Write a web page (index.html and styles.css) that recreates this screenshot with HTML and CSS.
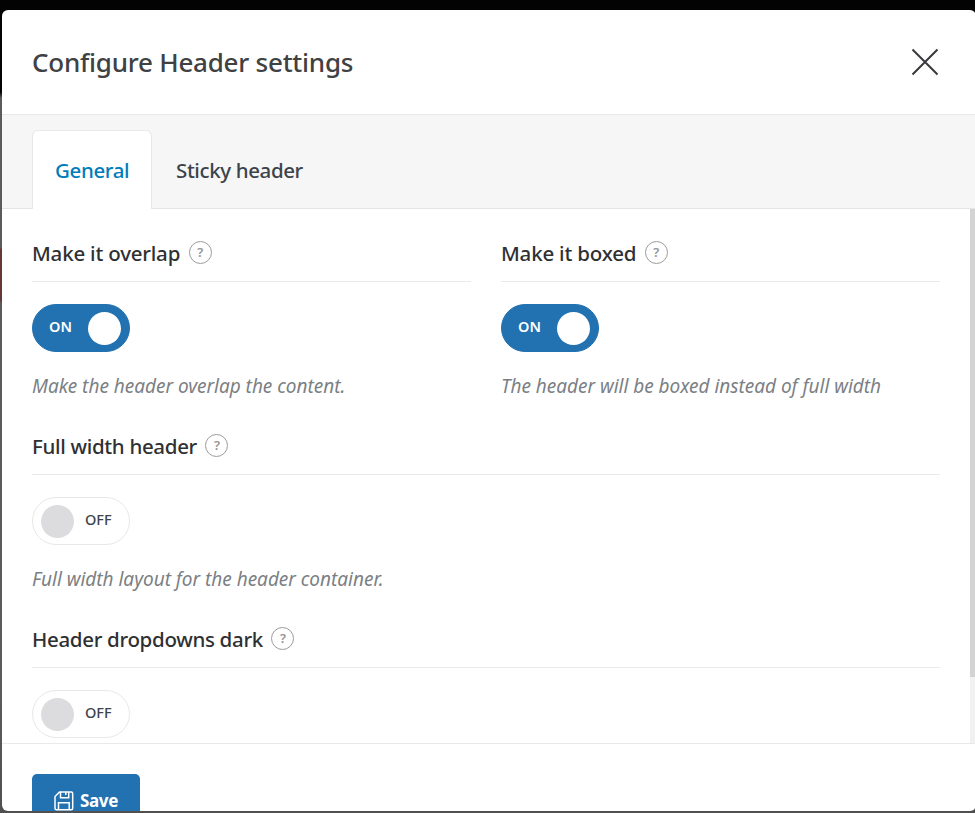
FILE: index.html
```html
<!DOCTYPE html>
<html lang="en">
<head>
<meta charset="utf-8">
<title>Configure Header settings</title>
<link rel="stylesheet" href="styles.css">
</head>
<body>
<div class="modal">
  <header class="modal-header">
    <h1 class="title"><span>Configure Header settings</span></h1>
    <svg class="close" viewBox="0 0 28 28" width="28" height="28"><path d="M1.5 1.5 26.5 26.5M26.5 1.5 1.5 26.5"/></svg>
  </header>
  <nav class="tabs">
    <div class="tab active"><span>General</span></div>
    <div class="tab"><span>Sticky header</span></div>
  </nav>
  <main class="content">
    <div class="fields">
      <section class="field">
        <div class="label"><span>Make it overlap</span><i class="help">?</i></div>
        <div class="switch on"><span class="state">ON</span><span class="knob"></span></div>
        <p class="hint">Make the header overlap the content.</p>
      </section>
      <section class="field">
        <div class="label"><span>Make it boxed</span><i class="help">?</i></div>
        <div class="switch on"><span class="state">ON</span><span class="knob"></span></div>
        <p class="hint">The header will be boxed instead of full width</p>
      </section>
      <section class="field wide">
        <div class="label"><span>Full width header</span><i class="help">?</i></div>
        <div class="switch"><span class="knob"></span><span class="state">OFF</span></div>
        <p class="hint">Full width layout for the header container.</p>
      </section>
      <section class="field wide">
        <div class="label"><span>Header dropdowns dark</span><i class="help">?</i></div>
        <div class="switch"><span class="knob"></span><span class="state">OFF</span></div>
      </section>
    </div>
    <div class="scrollbar"><div class="thumb"></div></div>
  </main>
  <footer class="modal-footer">
    <div class="save">
      <svg viewBox="0 0 20 20" width="20" height="20"><path d="M5.5 1H17.2Q18.7 1 18.7 2.5V17.2Q18.7 18.7 17.2 18.7H2.5Q1 18.7 1 17.2V5.5ZM6.5 1V6.7H14.7V1M11.8 1V4M4.5 18.7V11.8H15.2V18.7"/></svg>
      <span>Save</span>
    </div>
  </footer>
</div>
</body>
</html>
```
FILE: styles.css
```css
* { box-sizing: border-box; }
body {
  margin: 0;
  height: 813px;
  padding: 10px 0 0 2px;
  overflow: hidden;
  background: linear-gradient(#030303 0 92px, #5b5b5c 98px 247px, #673636 250px 300px, #5b5b5c 303px 700px, #505051);
  font-family: "Noto Sans", "Open Sans", sans-serif;
}
.modal {
  display: flex;
  flex-direction: column;
  width: 974px;
  height: 801px;
  overflow: hidden;
  border-radius: 6px;
  background: #fff;
}
.modal-header {
  display: flex;
  flex: 0 0 105px;
  align-items: center;
  justify-content: space-between;
  padding: 0 37.5px 0 30px;
  border-bottom: 1px solid #e9e9e9;
}
.title { margin: 0; color: #404143; font-size: 26px; font-weight: 500; letter-spacing: -0.24px; line-height: 36px; white-space: nowrap; }
.close { fill: none; stroke: #38393c; stroke-width: 2; }
.tabs {
  display: flex;
  flex: 0 0 94px;
  align-items: flex-end;
  padding-left: 30px;
  background: #f6f6f6;
  box-shadow: inset 0 -1px #e4e5e6;
}
.tab {
  height: 79px;
  padding: 26px 24px 0;
  color: #3c434a;
  font-size: 20.5px;
  font-weight: 500;
  letter-spacing: -0.38px;
  line-height: 28px;
  white-space: nowrap;
}
.tab.active {
  width: 120px;
  border: 1px solid #e8e8e8;
  border-bottom: 0;
  border-radius: 6px 6px 0 0;
  background: #fff;
  padding: 25px 22px 0;
  color: #007cba;
}
.content { display: flex; flex: 0 0 534px; overflow: hidden; }
.fields {
  display: grid;
  flex: 1;
  grid-template-columns: 439px 439px;
  grid-auto-rows: 193px;
  gap: 0 30px;
  padding: 23px 0 0 30px;
}
.wide { grid-column: 1 / -1; }
.label {
  display: flex;
  align-items: center;
  height: 50px;
  padding-bottom: 8px;
  border-bottom: 1px solid #e9eaea;
  color: #2f3032;
  font-size: 20.5px;
  font-weight: 500;
  letter-spacing: -0.2px;
  line-height: 28px;
  white-space: nowrap;
}
.wide .label { letter-spacing: -0.32px; }
.help {
  width: 23px;
  height: 23px;
  margin: 0 0 0 8.5px;
  border: 1px solid #9b9b9b;
  border-radius: 50%;
  color: #949494;
  font-size: 13px;
  font-style: normal;
  font-weight: 600;
  letter-spacing: 0;
  line-height: 21px;
  text-align: center;
}
.switch {
  display: flex;
  align-items: center;
  width: 98px;
  height: 48px;
  margin-top: 22px;
  padding: 0 8px;
  border: 1px solid #e8e8e9;
  border-radius: 24px;
  color: #3c434a;
  font-size: 14.5px;
  font-weight: 500;
}
.switch.on { padding: 0 8px 0 16px; justify-content: space-between; border-color: #2271b1; background: #2271b1; color: #fff; font-weight: 600; }
.knob { width: 33px; height: 33px; margin-top: 1px; border-radius: 50%; background: #dcdcde; }
.on .knob { background: #fff; }
.state { margin: -4px 0 0 11px; }
.on .state { margin-left: 0; }
.hint { margin: 20px 0 0; color: #7b7f84; font-size: 19px; font-style: italic; letter-spacing: -0.02px; line-height: 28px; white-space: nowrap; }
.scrollbar { width: 6px; background: #f1f1f1; }
.thumb { height: 468px; background: #d3d3d3; }
.modal-footer { flex: 1; padding: 30px 30px 0; border-top: 1px solid #e9e9e9; overflow: hidden; }
.save {
  display: flex;
  align-items: center;
  justify-content: center;
  gap: 6px;
  width: 108px;
  height: 53px;
  border-radius: 5px;
  background: #2271b1;
  color: #fff;
  font-size: 17px;
  font-weight: 700;
  letter-spacing: -0.3px;
}
.save svg { fill: none; stroke: #fff; stroke-width: 1.5; }
```
